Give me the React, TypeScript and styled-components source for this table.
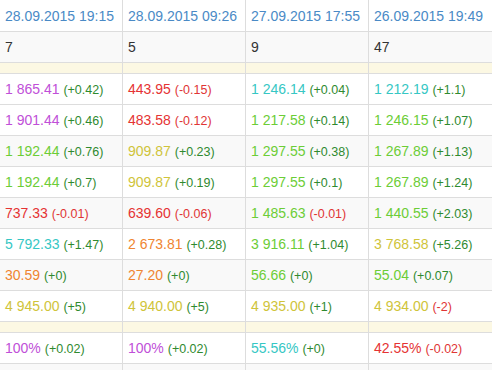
import React from "react"
import styled, { createGlobalStyle } from "styled-components"

type Tone = "purple" | "red" | "teal" | "green" | "olive" | "orange"
type RowBg = "white" | "stripe" | "warning"

interface CellData {
  value: string
  delta: string
  tone: Tone
}

const tones: Record<Tone, string> = {
  purple: "#c04fd8",
  red: "#e53333",
  teal: "#36c7c4",
  green: "#6ccd36",
  olive: "#cfc43a",
  orange: "#ef8531",
}

const backgrounds: Record<RowBg, string> = {
  white: "#ffffff",
  stripe: "#f9f9f9",
  warning: "#fcf8e3",
}

const GlobalStyle = createGlobalStyle`
  html, body {
    margin: 0;
    padding: 0;
    background: #fff;
    overflow: hidden;
  }
  body {
    font-family: "Liberation Sans", Arial, sans-serif;
    font-size: 14px;
    line-height: 20px;
    color: #333;
  }
`

const StatsTable = styled.table`
  width: 620px;
  table-layout: fixed;
  border-collapse: separate;
  border-spacing: 0;
`

const Column = styled.col<{ $width?: number }>`
  width: ${({ $width }) => ($width ? `${$width}px` : "auto")};
`

const Row = styled.tr<{ $bg: RowBg }>`
  background: ${({ $bg }) => backgrounds[$bg]};
`

const Cell = styled.td`
  box-sizing: border-box;
  height: 31px;
  padding: 5px;
  border-right: 1px solid #ddd;
  border-bottom: 1px solid #ddd;
  white-space: nowrap;
  overflow: hidden;
  vertical-align: top;
`

const HeadCell = styled(Cell)`
  height: 32px;
  padding-top: 6px;
`

const SpacerCell = styled(Cell)`
  padding: 0;
  height: 11px;
`

const DateLabel = styled.span`
  color: #4a8ac6;
`

const Value = styled.span<{ $tone: Tone }>`
  color: ${({ $tone }) => tones[$tone]};
`

const Delta = styled.span<{ $up: boolean }>`
  font-size: 12.5px;
  line-height: 1;
  color: ${({ $up }) => ($up ? "#2f8a2f" : "#e03535")};
`

const dates = ["28.09.2015 19:15", "28.09.2015 09:26", "27.09.2015 17:55", "26.09.2015 19:49"]
const counts = ["7", "5", "9", "47"]

const c = (value: string, delta: string, tone: Tone): CellData => ({ value, delta, tone })

const mainRows: { bg: RowBg; cells: CellData[] }[] = [
  {
    bg: "white",
    cells: [c("1 865.41", "+0.42", "purple"), c("443.95", "-0.15", "red"), c("1 246.14", "+0.04", "teal"), c("1 212.19", "+1.1", "teal")],
  },
  {
    bg: "white",
    cells: [c("1 901.44", "+0.46", "purple"), c("483.58", "-0.12", "red"), c("1 217.58", "+0.14", "green"), c("1 246.15", "+1.07", "green")],
  },
  {
    bg: "stripe",
    cells: [c("1 192.44", "+0.76", "green"), c("909.87", "+0.23", "olive"), c("1 297.55", "+0.38", "green"), c("1 267.89", "+1.13", "green")],
  },
  {
    bg: "white",
    cells: [c("1 192.44", "+0.7", "green"), c("909.87", "+0.19", "olive"), c("1 297.55", "+0.1", "green"), c("1 267.89", "+1.24", "green")],
  },
  {
    bg: "stripe",
    cells: [c("737.33", "-0.01", "red"), c("639.60", "-0.06", "red"), c("1 485.63", "-0.01", "green"), c("1 440.55", "+2.03", "green")],
  },
  {
    bg: "white",
    cells: [c("5 792.33", "+1.47", "teal"), c("2 673.81", "+0.28", "orange"), c("3 916.11", "+1.04", "green"), c("3 768.58", "+5.26", "olive")],
  },
  {
    bg: "stripe",
    cells: [c("30.59", "+0", "orange"), c("27.20", "+0", "orange"), c("56.66", "+0", "green"), c("55.04", "+0.07", "green")],
  },
  {
    bg: "white",
    cells: [c("4 945.00", "+5", "olive"), c("4 940.00", "+5", "olive"), c("4 935.00", "+1", "olive"), c("4 934.00", "-2", "olive")],
  },
]

const shareRow: CellData[] = [c("100%", "+0.02", "purple"), c("100%", "+0.02", "purple"), c("55.56%", "+0", "teal"), c("42.55%", "-0.02", "red")]

const ValueCell: React.FC<{ cell: CellData }> = ({ cell }) => (
  <Cell>
    <Value $tone={cell.tone}>{cell.value.replace(/ /g, "\u00a0")}</Value>{" "}
    <Delta $up={!cell.delta.startsWith("-")}>({cell.delta})</Delta>
  </Cell>
)

const SpacerRow: React.FC = () => (
  <Row $bg="warning">
    {dates.map((d) => (
      <SpacerCell key={d} />
    ))}
  </Row>
)

export default function App() {
  return (
    <>
      <GlobalStyle />
      <StatsTable>
        <colgroup>
          <Column $width={123} />
          <Column $width={123} />
          <Column $width={123} />
          <Column />
        </colgroup>
        <tbody>
          <Row $bg="white">
            {dates.map((d) => (
              <HeadCell key={d}>
                <DateLabel>{d}</DateLabel>
              </HeadCell>
            ))}
          </Row>
          <Row $bg="stripe">
            {counts.map((n, i) => (
              <Cell key={i}>{n}</Cell>
            ))}
          </Row>
          <SpacerRow />
          {mainRows.map((row, i) => (
            <Row key={i} $bg={row.bg}>
              {row.cells.map((cell, j) => (
                <ValueCell key={j} cell={cell} />
              ))}
            </Row>
          ))}
          <SpacerRow />
          <Row $bg="white">
            {shareRow.map((cell, j) => (
              <ValueCell key={j} cell={cell} />
            ))}
          </Row>
          <Row $bg="stripe">
            {dates.map((d) => (
              <Cell key={d}>{"\u00a0"}</Cell>
            ))}
          </Row>
        </tbody>
      </StatsTable>
    </>
  )
}
